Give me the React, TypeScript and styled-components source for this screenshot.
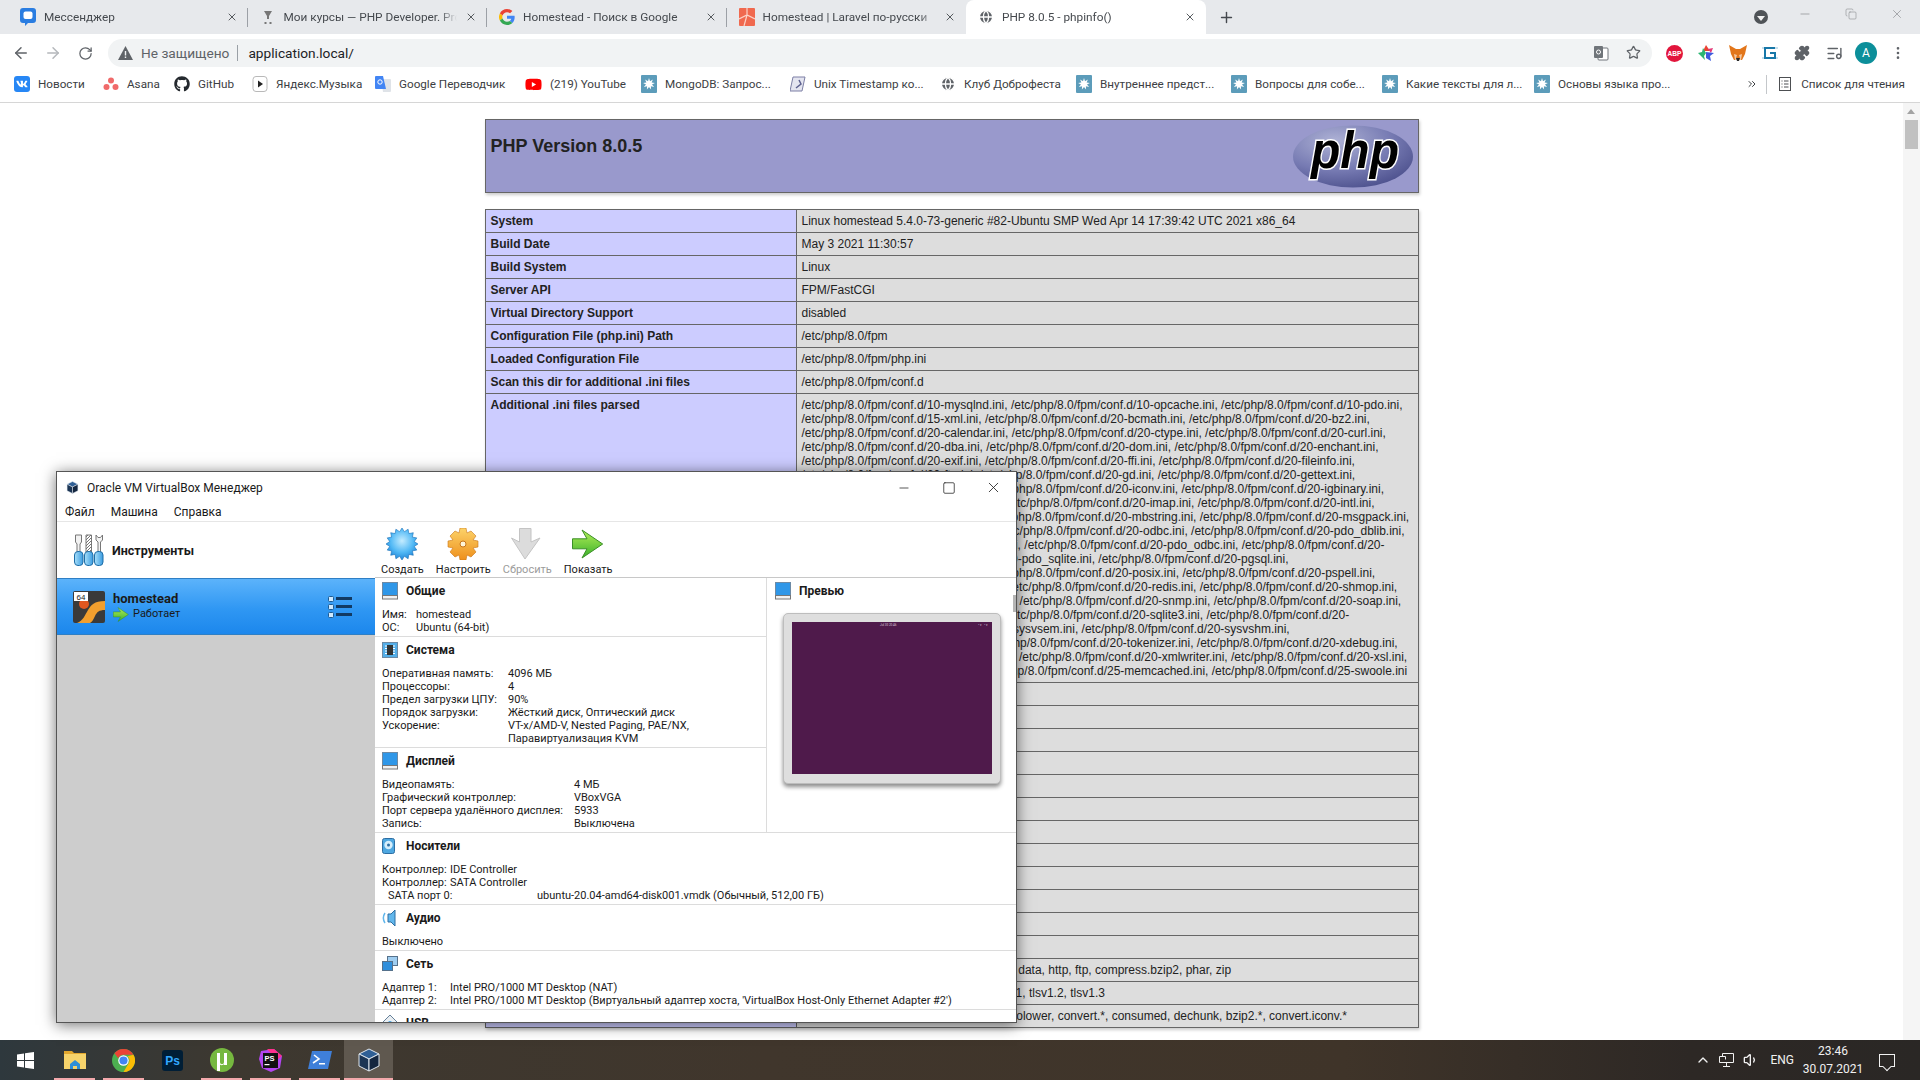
import * as React from "react";
import styled, { createGlobalStyle } from "styled-components";
import { ArrowLeft, ArrowRight, RotateCw, Star, Puzzle, MoreVertical, X, Plus, Minus, Square, ChevronUp, Volume1, ChevronsRight, Copy, Globe, ListMusic } from "lucide-react";
import { FaGithub, FaYoutube, FaVk } from "react-icons/fa";

const UI = `Roboto, "Noto Sans", sans-serif`;

const GlobalStyle = createGlobalStyle`
    html, body {
        margin: 0;
        height: 100%;
        overflow: hidden;
        background: #fff;
    }
    * { box-sizing: border-box; }
`;

const Screen = styled.div`
    position: relative;
    display: flex;
    flex-direction: column;
    width: 1920px;
    height: 1080px;
    overflow: hidden;
    font-family: ${UI};
`;

/* ---------- chrome ---------- */

const TabStrip = styled.div`
    display: flex;
    align-items: flex-end;
    flex: 0 0 34px;
    padding-left: 8px;
    background: #e7e9ec;
    color: #45494e;
    font-size: 11.8px;
`;

const Tab = styled.div<{ $active?: boolean }>`
    position: relative;
    display: flex;
    align-items: center;
    gap: 8px;
    flex: 0 0 239.5px;
    min-width: 0;
    height: 34px;
    padding: 0 10px 0 12px;
    background: ${(p) => (p.$active ? "#fff" : "transparent")};
    border-radius: ${(p) => (p.$active ? "8px 8px 0 0" : "0")};

    &:not(:nth-child(n + 4))::after {
        content: "";
        position: absolute;
        right: 0;
        top: 8px;
        height: 19px;
        width: 1px;
        background: #9ca0a6;
    }

    svg {
        flex-shrink: 0;
    }
`;

const TabTitle = styled.span`
    flex: 1;
    min-width: 0;
    overflow: hidden;
    white-space: nowrap;
    -webkit-mask-image: linear-gradient(90deg, #000 90%, transparent);
`;

const NewTab = styled.div`
    display: flex;
    align-items: center;
    height: 34px;
    margin-left: 12px;
    color: #45494e;
`;

const WindowControls = styled.div`
    display: flex;
    align-items: center;
    height: 34px;
    margin-left: auto;
    color: #8a8d91;
`;

const ProfileDot = styled.div`
    display: flex;
    align-items: center;
    justify-content: center;
    width: 14px;
    height: 14px;
    margin-right: 14px;
    border-radius: 50%;
    background: #4f5357;
`;

const ProfileCaret = styled.div`
    width: 0;
    height: 0;
    margin-top: 2px;
    border-left: 4px solid transparent;
    border-right: 4px solid transparent;
    border-top: 5px solid #f1f1f1;
`;

const CaptionSlot = styled.div`
    display: flex;
    justify-content: center;
    width: 46px;
    margin-bottom: 6px;
`;

const Toolbar = styled.div`
    display: flex;
    align-items: center;
    flex: 0 0 34px;
    padding: 5px 6px 1px 5px;
    background: #fff;
`;

const NavButton = styled.div<{ $off?: boolean }>`
    display: flex;
    align-items: center;
    justify-content: center;
    width: 32px;
    color: ${(p) => (p.$off ? "#b5b8bc" : "#5f6368")};
`;

const Omnibox = styled.div`
    display: flex;
    align-items: center;
    flex: 1;
    height: 28px;
    margin: 0 6px 0 7px;
    padding: 0 10px 1px;
    border-radius: 14px;
    background: #f1f3f4;
    font-size: 14px;
    color: #202124;
`;

const NotSecure = styled.span`
    margin-left: 8px;
    padding-right: 8px;
    border-right: 1px solid #9aa0a6;
    color: #5f6368;
    font-size: 13.7px;
`;

const Url = styled.span`
    margin-left: 10px;
    font-size: 13.7px;
`;

const OmniIcons = styled.div`
    display: flex;
    align-items: center;
    gap: 17px;
    margin-left: auto;
    padding-right: 1px;
    color: #5f6368;
`;

const Extension = styled.div`
    display: flex;
    align-items: center;
    justify-content: center;
    width: 32px;
    color: #5f6368;
`;

const Avatar = styled.div`
    display: flex;
    align-items: center;
    justify-content: center;
    width: 22px;
    height: 22px;
    border-radius: 50%;
    background: #0c8f9a;
    color: #fff;
    font-size: 12px;
`;

const BookmarkBar = styled.div`
    display: flex;
    align-items: center;
    flex: 0 0 35px;
    padding: 0 0 2px 14px;
    background: #fff;
    border-bottom: 1px solid #d6d6d6;
    color: #3c4043;
    font-size: 11.7px;
`;

const Bookmark = styled.div<{ $w: number }>`
    display: flex;
    align-items: center;
    gap: 8px;
    flex: 0 0 ${(p) => p.$w}px;
    white-space: nowrap;
`;

const BookmarkEnd = styled.div`
    display: flex;
    align-items: center;
    margin-left: auto;
    padding-right: 15px;
    gap: 8px;
`;

const EndDivider = styled.div`
    width: 1px;
    height: 19px;
    margin-right: 2px;
    background: #c4c7ca;
`;

const VkTile = styled.div`
    display: flex;
    align-items: center;
    justify-content: center;
    width: 16px;
    height: 16px;
    border-radius: 3px;
    background: #2787f5;
    color: #fff;
`;

/* ---------- phpinfo page ---------- */

const PageArea = styled.div`
    display: flex;
    flex: 1;
    min-height: 0;
`;

const PhpDoc = styled.main`
    flex: 1;
    padding-top: 16px;
    overflow: hidden;
    font-family: "Liberation Sans", Arial, sans-serif;
    font-size: 12px;
    line-height: 14px;
    color: #222;
`;

const PhpTable = styled.table`
    width: 934px;
    margin: 0 auto 16px;
    border-collapse: collapse;
    border: 0;
    box-shadow: 1px 2px 3px #ccc;
`;

const PhpHeadCell = styled.td`
    height: 73px;
    padding: 4px 5px;
    border: 1px solid #666;
    background: #99c;
    vertical-align: top;
`;

const PhpLogoWrap = styled.div`
    float: right;
    margin-top: 1px;

    svg {
        display: block;
    }
`;

const PhpTitle = styled.h1`
    margin: 0;
    padding-top: 12px;
    font-size: 18px;
    line-height: 21px;
    font-weight: bold;
    color: #222;
`;

const PhpKey = styled.td`
    width: 311px;
    padding: 4px 5px;
    border: 1px solid #666;
    background: #ccf;
    font-weight: bold;
    vertical-align: baseline;
    color: #222;
`;

const PhpValue = styled.td`
    padding: 4px 5px;
    border: 1px solid #666;
    background: #ddd;
    vertical-align: baseline;
    word-wrap: break-word;
    color: #222;
`;

const Scrollbar = styled.div`
    position: relative;
    flex: 0 0 17px;
    background: #f5f5f5;
`;

const ScrollArrow = styled.div`
    position: absolute;
    top: 6px;
    left: 4px;
    width: 0;
    height: 0;
    border-left: 4px solid transparent;
    border-right: 4px solid transparent;
    border-bottom: 5px solid #a3a3a3;
`;

const ScrollThumb = styled.div`
    position: absolute;
    top: 17px;
    left: 2px;
    width: 13px;
    height: 29px;
    background: #c1c1c1;
`;

/* ---------- taskbar ---------- */

const Taskbar = styled.footer`
    display: flex;
    align-items: center;
    flex: 0 0 40px;
    background: linear-gradient(90deg, #2e383d 0%, #3d3830 12%, #40362c 40%, #3f3429 70%, #2d2825 88%, #2a2725 100%);
    color: #f1f1f1;
    font-size: 12px;
`;

const StartSlot = styled.div`
    display: flex;
    align-items: center;
    justify-content: center;
    flex: 0 0 50px;
    height: 40px;
`;

const TaskButton = styled.div<{ $running?: boolean; $active?: boolean }>`
    position: relative;
    display: flex;
    align-items: center;
    justify-content: center;
    flex: 0 0 49px;
    height: 40px;
    background: ${(p) => (p.$active ? "#5f584f" : "transparent")};

    &::after {
        content: "";
        display: ${(p) => (p.$running ? "block" : "none")};
        position: absolute;
        left: ${(p) => (p.$active ? "0" : "4px")};
        right: ${(p) => (p.$active ? "0" : "4px")};
        bottom: 0;
        height: 2px;
        background: #f3a9ac;
    }
`;

const Tray = styled.div`
    display: flex;
    align-items: center;
    gap: 8px;
    margin-left: auto;
`;

const TrayLang = styled.span`
    margin: 0 1px 0 3px;
    font-size: 12px;
`;

const Clock = styled.div`
    display: flex;
    flex-direction: column;
    align-items: center;
    gap: 3px;
    width: 60px;
    margin-right: 8px;
    line-height: 15px;
`;

const NotifyBox = styled.div`
    position: relative;
    width: 16px;
    height: 13px;
    margin-right: 25px;
    border: 1px solid #f1f1f1;

    &::after {
        content: "";
        position: absolute;
        left: 4px;
        bottom: -4px;
        width: 5px;
        height: 5px;
        background: #2b2725;
        border-right: 1px solid #f1f1f1;
        border-bottom: 1px solid #f1f1f1;
        transform: rotate(45deg);
    }
`;

/* ---------- virtualbox ---------- */

const VBoxWindow = styled.section`
    position: absolute;
    top: 471px;
    left: 56px;
    display: flex;
    flex-direction: column;
    width: 961px;
    height: 552px;
    background: #fff;
    border: 1px solid #555;
    box-shadow: 0 2px 14px rgba(0, 0, 0, 0.55);
    color: #1a1a1a;
    font-size: 11px;
`;

const TitleBar = styled.div`
    display: flex;
    align-items: center;
    flex: 0 0 31px;
    padding-left: 9px;
    gap: 8px;
    font-size: 12px;
`;

const TitleButtons = styled.div`
    display: flex;
    margin-left: auto;
    color: #222;
`;

const TitleButton = styled.div`
    display: flex;
    align-items: center;
    justify-content: center;
    width: 45px;
    height: 31px;
`;

const MenuBar = styled.div`
    display: flex;
    align-items: center;
    gap: 16px;
    flex: 0 0 19px;
    padding-left: 8px;
    border-bottom: 1px solid #e6e6e6;
    font-size: 12px;
`;

const VBoxBody = styled.div`
    display: flex;
    flex: 1;
    min-height: 0;
`;

const Sidebar = styled.aside`
    display: flex;
    flex-direction: column;
    flex: 0 0 318px;
    background: #cdcdcd;
`;

const ToolsRow = styled.div`
    display: flex;
    align-items: center;
    flex: 0 0 56px;
    gap: 8px;
    padding-left: 17px;
    background: #fff;
    font-size: 12.5px;
    font-weight: bold;
`;

const VmRow = styled.div`
    position: relative;
    display: flex;
    align-items: center;
    flex: 0 0 57px;
    gap: 8px;
    padding-left: 16px;
    background: linear-gradient(180deg, #5cb3fb 0%, #2f97f3 55%, #1c87ec 100%);
    border-top: 1px solid #2f7fc4;
    border-bottom: 1px solid #2f7fc4;
`;

const VmText = styled.div`
    display: flex;
    flex-direction: column;
    gap: 1px;
    line-height: 14px;
`;

const VmName = styled.strong`
    font-size: 13px;
`;

const VmState = styled.span`
    display: flex;
    align-items: center;
    gap: 4px;
`;

const VmMenu = styled.div`
    margin-left: auto;
    margin-right: 23px;
    line-height: 0;
`;

const MainPane = styled.div`
    display: flex;
    flex-direction: column;
    flex: 1;
    min-width: 0;
`;

const ToolStrip = styled.div`
    display: flex;
    flex: 0 0 56px;
    gap: 12px;
    padding: 6px 0 0 6px;
    border-bottom: 1px solid #c8c8c8;
`;

const ToolButton = styled.div<{ $off?: boolean }>`
    display: flex;
    flex-direction: column;
    align-items: center;
    gap: 3px;
    color: ${(p) => (p.$off ? "#9b9b9b" : "#1a1a1a")};

    svg {
        display: block;
        height: 32px;
    }
`;

const Details = styled.div`
    position: relative;
    flex: 1;
    min-height: 0;
    overflow: hidden;
`;

const TopGrid = styled.div`
    display: grid;
    grid-template-columns: 391px 1fr;
    border-bottom: 1px solid #dcdcdc;
`;

const PreviewCol = styled.div`
    padding: 5px 7px 0 8px;
    border-left: 1px solid #dcdcdc;
`;

const Section = styled.div`
    padding: 5px 7px 2px;
    border-bottom: 1px solid #dcdcdc;
`;

const LeftSection = styled(Section)`
    &:last-child {
        border-bottom: 0;
    }
`;

const SectionHead = styled.div`
    display: flex;
    align-items: center;
    gap: 8px;
    height: 16px;
    margin-bottom: 9px;
    font-size: 12px;
    font-weight: bold;
`;

const InfoRow = styled.div<{ $label: number; $indent?: number }>`
    display: grid;
    grid-template-columns: ${(p) => p.$label}px 1fr;
    padding-left: ${(p) => p.$indent || 0}px;
    line-height: 13px;
    white-space: nowrap;
`;

const PlainRow = styled.div`
    line-height: 13px;
`;

const PreviewFrame = styled.div`
    width: 218px;
    height: 171px;
    margin: 14px 0 0 8px;
    padding: 8px;
    border-radius: 5px;
    background: #dedede;
    border: 1px solid #bdbdbd;
    box-shadow: 0 3px 4px rgba(0, 0, 0, 0.45);
`;

const PreviewScreen = styled.div`
    display: flex;
    justify-content: space-between;
    width: 200px;
    height: 152px;
    padding: 1px 4px 0 88px;
    background: #4f1a4b;
    color: #d9c9d8;
    font-size: 3px;
    line-height: 5px;
`;

const DetailsThumb = styled.div`
    position: absolute;
    top: 17px;
    right: 0;
    width: 3px;
    height: 17px;
    background: #b5b5b5;
`;

/* ---------- drawings ---------- */

const starPoints = (cx: number, cy: number, r1: number, r2: number, n: number) => {
    const pts: string[] = [];
    for (let i = 0; i < n * 2; i++) {
        const r = i % 2 ? r2 : r1;
        const a = (Math.PI * i) / n;
        pts.push(`${(cx + r * Math.sin(a)).toFixed(1)},${(cy - r * Math.cos(a)).toFixed(1)}`);
    }
    return pts.join(" ");
};

const PhpLogo = () => (
    <svg width="120" height="63" viewBox="0 0 120 63">
        <defs>
            <radialGradient id="phpG" cx="35%" cy="25%" r="85%">
                <stop offset="0" stopColor="#aeb2d5" />
                <stop offset="0.55" stopColor="#777bb3" />
                <stop offset="1" stopColor="#484c89" />
            </radialGradient>
        </defs>
        <ellipse cx="60" cy="31.500" rx="60" ry="31" fill="url(#phpG)" />
        <text x="62" y="43" textAnchor="middle" textLength="88" lengthAdjust="spacingAndGlyphs"
            fontFamily="Liberation Sans" fontStyle="italic" fontWeight="bold" fontSize="52"
            fill="#000" stroke="#fff" strokeWidth="3" paintOrder="stroke">php</text>
    </svg>
);

const MessengerIcon = () => (
    <svg width="16" height="18" viewBox="0 0 16 18">
        <path d="M3 0h10a3 3 0 0 1 3 3v9a3 3 0 0 1-3 3H8l-3 3v-3H3a3 3 0 0 1-3-3V3a3 3 0 0 1 3-3z" fill="#2a7de1" />
        <rect x="3.500" y="3.500" width="9" height="7.500" rx="2" fill="#fff" />
    </svg>
);

const CourseIcon = () => (
    <svg width="16" height="16" viewBox="0 0 16 16" fill="#777">
        <path d="M4 2h8L9 7v3H7V7z" />
        <rect x="4.500" y="13" width="2" height="2" />
        <rect x="9.500" y="13" width="2" height="2" />
    </svg>
);

const GoogleIcon = () => (
    <svg width="16" height="16" viewBox="0 0 48 48">
        <path fill="#EA4335" d="M24 9.5c3.5 0 6.7 1.2 9.2 3.6l6.9-6.9C35.9 2.4 30.5 0 24 0 14.6 0 6.5 5.4 2.6 13.2l8 6.2C12.5 13.7 17.800 9.500 24 9.500z" />
        <path fill="#4285F4" d="M47 24.500c0-1.600-.1-3.100-.4-4.500H24v9h12.900c-.6 3-2.200 5.500-4.700 7.200l7.700 6C44.400 37.900 47 31.800 47 24.500z" />
        <path fill="#FBBC05" d="M10.600 28.600A14.500 14.500 0 0 1 10.600 19.400l-8-6.200A24 24 0 0 0 2.600 34.800z" />
        <path fill="#34A853" d="M24 48c6.500 0 11.900-2.100 15.900-5.800l-7.700-6c-2.200 1.400-4.900 2.300-8.200 2.300-6.200 0-11.500-4.200-13.400-9.900l-8 6.200C6.500 42.600 14.600 48 24 48z" />
    </svg>
);

const LaravelIcon = () => (
    <svg width="16" height="18" viewBox="0 0 16 18">
        <rect width="16" height="18" rx="1" fill="#f0694f" />
        <path d="M0 11 L8 7 L16 11 M8 0 V7 M5 18 L8 7" stroke="#fbd3c8" strokeWidth="1.200" fill="none" />
    </svg>
);

const AsanaIcon = () => (
    <svg width="16" height="16" viewBox="0 0 16 16" fill="#f06a6a">
        <circle cx="8" cy="4.500" r="3" />
        <circle cx="3.500" cy="11" r="3" />
        <circle cx="12.500" cy="11" r="3" />
    </svg>
);

const YandexIcon = () => (
    <svg width="16" height="16" viewBox="0 0 16 16">
        <rect x="1" y="0.500" width="14" height="15" rx="3" fill="#fff" stroke="#b9b9b9" />
        <path d="M6 4.500 L11 8 L6 11.500z" fill="#222" />
    </svg>
);

const TranslateIcon = () => (
    <svg width="16" height="16" viewBox="0 0 16 16">
        <path d="M6 3h9a1 1 0 0 1 1 1v11a1 1 0 0 1-1 1H8z" fill="#dfe3e8" />
        <path d="M1 0h7l3 13H1a1 1 0 0 1-1-1V1a1 1 0 0 1 1-1z" fill="#4285f4" />
        <circle cx="5" cy="6" r="2.200" fill="none" stroke="#fff" />
    </svg>
);

const SplatIcon = () => (
    <svg width="16" height="18" viewBox="0 0 16 18">
        <rect width="16" height="18" rx="1" fill="#5c9cba" />
        <polygon points={starPoints(8, 9, 6, 3, 9)} fill="#fff" />
    </svg>
);

const UnixIcon = () => (
    <svg width="16" height="16" viewBox="0 0 16 16">
        <path d="M3 1h12l-3 14H0z" fill="#e4e5f0" stroke="#7c7fa5" />
        <path d="M9 4 L11 8 L6 12" stroke="#5d6190" strokeWidth="1.500" fill="none" />
    </svg>
);

const TranslatePageIcon = () => (
    <svg width="16" height="16" viewBox="0 0 16 16">
        <rect x="5" y="3" width="10" height="12" rx="1" fill="#fff" stroke="#70757a" />
        <rect x="1" y="1" width="9" height="12" rx="1" fill="#70757a" />
        <circle cx="5.500" cy="7" r="2" fill="none" stroke="#fff" />
    </svg>
);

const WarnIcon = () => (
    <svg width="15" height="14" viewBox="0 0 15 14">
        <path d="M7.500 0 L15 14 H0z" fill="#5f6368" />
        <rect x="6.800" y="5" width="1.400" height="4.500" fill="#f1f3f4" />
        <rect x="6.800" y="10.500" width="1.400" height="1.500" fill="#f1f3f4" />
    </svg>
);

const AbpIcon = () => (
    <svg width="17" height="17" viewBox="0 0 18 18">
        <circle cx="9" cy="9" r="9" fill="#e2163c" />
        <text x="9" y="12" textAnchor="middle" fontSize="7" fontWeight="bold" fill="#fff" fontFamily="Liberation Sans">ABP</text>
    </svg>
);

const ColorStarIcon = () => (
    <svg width="18" height="18" viewBox="0 0 18 18">
        <path d="M9 1 L13 7 L6 7z" fill="#ea4335" />
        <path d="M11 5 L16 4 L14 9z" fill="#e33b7a" />
        <path d="M9 8 L17 9 L13 12 L14 17 L9 14z" fill="#3d5adf" />
        <path d="M1 9 L5 8 L6 4 L9 9 L7 12 L8 16 L5 13z" fill="#2bb673" />
    </svg>
);

const FoxIcon = () => (
    <svg width="18" height="18" viewBox="0 0 18 18">
        <path d="M0 1 L7 5 H11 L18 1 L16 10 L13 16 H5 L2 10z" fill="#e2761b" />
        <path d="M5 10 L8 11 L7 14 H11 L10 11 L13 10 L12 16 H6z" fill="#f5c8a0" />
        <path d="M7 14 H11 L10 17 H8z" fill="#2b2b2b" />
    </svg>
);

const GridExtIcon = () => (
    <svg width="16" height="16" viewBox="0 0 16 16" fill="none" stroke="#1877a8" strokeWidth="2">
        <path d="M13 3H3v10h10V8H8" />
        <path d="M0 3h16M0 13h16" strokeWidth="0.800" opacity="0.6" />
    </svg>
);

const ListIcon = () => (
    <svg width="16" height="16" viewBox="0 0 16 16" fill="none" stroke="#4d4f52">
        <rect x="2.500" y="1.500" width="11" height="13" />
        <path d="M4.500 5h1 M7 5h4.500 M4.500 8h1 M7 8h4.500 M4.500 11h1 M7 11h4.500" />
    </svg>
);

const WindowsLogo = () => (
    <svg width="17" height="17" viewBox="0 0 17 17" fill="#fff">
        <path d="M0 2.400 7 1.400V8H0z M8 1.300 17 0V8H8z M0 9h7v6.600L0 14.600z M8 9h9v8L8 15.700z" />
    </svg>
);

const ExplorerIcon = () => (
    <svg width="22" height="20" viewBox="0 0 22 20">
        <path d="M0 1h8l2 2h12v3H0z" fill="#e2a72e" />
        <rect y="4" width="22" height="15" fill="#f6d36b" />
        <path d="M6 19v-5l5-4 5 4v5h-3v-3H9v3z" fill="#2f8fd8" />
    </svg>
);

const ChromeIcon = () => (
    <svg width="23" height="23" viewBox="0 0 48 48">
        <circle cx="24" cy="24" r="24" fill="#4caf50" />
        <path d="M24 0a24 24 0 0 1 20.800 12H24a12 12 0 0 0-11.100 7.400L5.200 8.800A24 24 0 0 1 24 0z" fill="#ea4335" />
        <path d="M44.800 12A24 24 0 0 1 24 48l10.400-18A12 12 0 0 0 32.500 15z" fill="#fbbc05" />
        <circle cx="24" cy="24" r="11" fill="#fff" />
        <circle cx="24" cy="24" r="8.500" fill="#4285f4" />
    </svg>
);

const PsIcon = () => (
    <svg width="21" height="21" viewBox="0 0 21 21">
        <rect width="21" height="21" rx="3" fill="#001e36" />
        <text x="10.500" y="15" textAnchor="middle" fontFamily="Liberation Sans" fontWeight="bold" fontSize="12" fill="#31a8ff">Ps</text>
    </svg>
);

const TorrentIcon = () => (
    <svg width="24" height="24" viewBox="0 0 24 24">
        <circle cx="12" cy="12" r="12" fill="#76b83f" />
        <path d="M7 5h3v9c0 3 4 3 4 0V5h3v12h-3v-1c-1 1.500-3 1.500-4 .5V23H7z" fill="#fff" />
    </svg>
);

const StormIcon = () => (
    <svg width="23" height="23" viewBox="0 0 23 23">
        <polygon points="2,2 15,0 23,7 21,19 12,23 3,19 0,10" fill="#b345f1" />
        <polygon points="8,0 15,0 23,7 18,11" fill="#ff318c" />
        <rect x="4" y="4" width="15" height="15" fill="#111" />
        <text x="5.500" y="12" fontFamily="Liberation Sans" fontWeight="bold" fontSize="7.500" fill="#fff">PS</text>
        <rect x="5.500" y="15" width="5" height="1.200" fill="#fff" />
    </svg>
);

const ShellIcon = () => (
    <svg width="24" height="20" viewBox="0 0 24 20">
        <polygon points="4,1 24,1 20,19 0,19" fill="#3f7fd9" />
        <path d="M6 5 L11 9 L5 13" stroke="#fff" strokeWidth="1.600" fill="none" />
        <rect x="11" y="13" width="6" height="1.500" fill="#fff" />
    </svg>
);

const VBoxCube = ({ size }: { size: number }) => (
    <svg width={size} height={size} viewBox="0 0 24 24">
        <polygon points="12,1 22,6 12,11 2,6" fill="#2f5f95" stroke="#dfe7ef" />
        <polygon points="2,6 12,11 12,23 2,18" fill="#1c3554" stroke="#dfe7ef" />
        <polygon points="22,6 12,11 12,23 22,18" fill="#14263f" stroke="#dfe7ef" />
    </svg>
);

const NetworkTray = () => (
    <svg width="16" height="15" viewBox="0 0 16 15" fill="none" stroke="#f1f1f1">
        <path d="M3.500 3.500V.500h11v9h-14v-6h6v3" />
        <path d="M7.500 9.500v4M4 13.500h7" />
    </svg>
);

const ToolsIcon = () => (
    <svg width="30" height="32" viewBox="0 0 30 32">
        <defs>
            <linearGradient id="handle" x1="0" y1="0" x2="1" y2="0">
                <stop offset="0" stopColor="#a9e0fa" />
                <stop offset="1" stopColor="#3a9be0" />
            </linearGradient>
            <pattern id="hatch" width="3" height="3" patternUnits="userSpaceOnUse">
                <path d="M0 3 L3 0" stroke="#777" />
            </pattern>
        </defs>
        <path d="M1.500 1h6v7l-1.500 2v8h-3v-8l-1.500-2z" fill="#f2f2f2" stroke="#777" />
        <path d="M12 1h5.500v17H12z" fill="url(#hatch)" stroke="#777" />
        <path d="M22 1v5l2 2v10h2.500V8l2-2V1l-2 2.500h-2.500z" fill="#f2f2f2" stroke="#777" />
        {[0.5, 10.5, 20.5].map((x) => (
            <rect key={x} x={x} y="17.500" width="8.500" height="14" rx="3.500" fill="url(#handle)" stroke="#1f6ea8" />
        ))}
    </svg>
);

const VmIcon = () => (
    <svg width="32" height="32" viewBox="0 0 32 32">
        <rect width="32" height="32" rx="2" fill="#3a3a3a" />
        <path d="M4 32c6-2 8-8 11-13s6-9 17-9v9c-6 0-8 2-10 6-2 4-3 6-5 7z" fill="#f29f2e" />
        <circle cx="11" cy="13" r="5" fill="#e2571f" />
        <rect x="1" y="1" width="14" height="9" fill="#fff" />
        <text x="8" y="8.500" textAnchor="middle" fontSize="8" fontFamily="Liberation Sans" fill="#222">64</text>
    </svg>
);

const RunArrow = ({ size }: { size: number }) => (
    <svg width={size} height={Math.round(size * 0.92)} viewBox="0 0 32 29">
        <defs>
            <linearGradient id={`go${size}`} x1="0" y1="0" x2="0" y2="1">
                <stop offset="0" stopColor="#b4ee58" />
                <stop offset="1" stopColor="#39b02a" />
            </linearGradient>
        </defs>
        <path d="M0.500 9.300h14.500L10 0.500l20.700 14L10 28.500l5-9.200H0.500z" fill={`url(#go${size})`} stroke="#3b8f27" />
    </svg>
);

const VmMenuIcon = () => (
    <svg width="24" height="22" viewBox="0 0 24 22">
        {[1, 9, 17].map((y) => (
            <React.Fragment key={y}>
                <rect x="0.500" y={y - 0.5} width="5" height="5" rx="1" fill="#cfeaff" stroke="#1c5a94" />
                <rect x="8" y={y} width="16" height="3" fill="#123a63" />
            </React.Fragment>
        ))}
    </svg>
);

const CreateIcon = () => (
    <svg width="32" height="32" viewBox="0 0 32 32">
        <defs>
            <radialGradient id="burst" cx="50%" cy="40%" r="60%">
                <stop offset="0" stopColor="#c4ecff" />
                <stop offset="0.6" stopColor="#52b9f5" />
                <stop offset="1" stopColor="#1f85d8" />
            </radialGradient>
        </defs>
        <polygon points={starPoints(16, 16, 16, 12.5, 16)} fill="url(#burst)" stroke="#1f72b8" strokeWidth="0.600" />
    </svg>
);

const GearIcon = () => (
    <svg width="32" height="32" viewBox="0 0 32 32">
        <defs>
            <linearGradient id="gear" x1="0" y1="0" x2="0" y2="1">
                <stop offset="0" stopColor="#fcd36a" />
                <stop offset="1" stopColor="#ee8f1b" />
            </linearGradient>
        </defs>
        <path d="M13 0h6l1 5 4-2 5 5-3 4 5 1v6l-5 1 3 4-5 5-4-2-1 5h-6l-1-5-4 2-5-5 3-4-5-1v-6l5-1-3-4 5-5 4 2z" fill="url(#gear)" stroke="#c9761a" strokeWidth="0.600" />
        <circle cx="16" cy="16" r="3" fill="#fff5d8" stroke="#c9761a" />
    </svg>
);

const ResetIcon = () => (
    <svg width="32" height="32" viewBox="0 0 32 32">
        <path d="M8.500 0.500H20V14l9-4-15 21L0.500 10l8 4z" fill="#dcdcdc" stroke="#c4c4c4" />
    </svg>
);

const Monitor = ({ color }: { color: string }) => (
    <svg width="16" height="18" viewBox="0 0 16 18">
        <rect x="0.500" y="0.500" width="15" height="13" fill={color} stroke="#6d8aa5" />
        <rect x="0.500" y="13.500" width="15" height="3.500" fill="#f2f2f2" stroke="#777" />
    </svg>
);

const SystemIcon = () => (
    <svg width="16" height="16" viewBox="0 0 16 16">
        <rect x="0.500" y="0.500" width="15" height="15" fill="#54aee8" stroke="#6d8aa5" />
        <rect x="5" y="3" width="6" height="10" fill="#333" />
        <path d="M3 4h2 M3 6.500h2 M3 9h2 M3 11.500h2 M11 4h2 M11 6.500h2 M11 9h2 M11 11.500h2" stroke="#fff" />
    </svg>
);

const DiskIcon = () => (
    <svg width="16" height="16" viewBox="0 0 16 16">
        <rect x="0.500" y="0.500" width="12" height="15" rx="2" fill="#4ea7e0" stroke="#2d6ea3" />
        <circle cx="6.500" cy="7" r="4.200" fill="#d5eefb" />
        <circle cx="6.500" cy="7" r="1.500" fill="#2d6ea3" />
    </svg>
);

const AudioIcon = () => (
    <svg width="16" height="16" viewBox="0 0 16 16" fill="none">
        <path d="M6 4h3l4-4v16l-4-4H6z" fill="#62b7ec" stroke="#2d6ea3" />
        <path d="M3 3c-2 3-2 7 0 10" stroke="#62b7ec" strokeWidth="1.500" />
    </svg>
);

const NetIcon = () => (
    <svg width="16" height="16" viewBox="0 0 16 16">
        <rect x="5.500" y="0.500" width="10" height="9" fill="#9fcdf0" stroke="#55718b" />
        <rect x="0.500" y="5.500" width="10" height="9" fill="#2f8fdc" stroke="#55718b" />
    </svg>
);

const UsbIcon = () => (
    <svg width="16" height="16" viewBox="0 0 16 16">
        <polygon points="8,0 16,8 8,16 0,8" fill="#e9eef2" stroke="#66819a" />
        <circle cx="8" cy="8" r="2" fill="#4ea7e0" />
    </svg>
);

/* ---------- data ---------- */

const confPath = "/etc/php/8.0/fpm/conf.d/";
const iniFiles = [
    "10-mysqlnd", "10-opcache", "10-pdo", "15-xml", "20-bcmath", "20-bz2", "20-calendar", "20-ctype", "20-curl",
    "20-dba", "20-dom", "20-enchant", "20-exif", "20-ffi", "20-fileinfo", "20-ftp", "20-gd", "20-gettext", "20-gmp",
    "20-iconv", "20-igbinary", "20-imagick", "20-imap", "20-intl", "20-ldap", "20-mbstring", "20-msgpack", "20-mysqli",
    "20-odbc", "20-pdo_dblib", "20-pdo_mysql", "20-pdo_odbc", "20-pdo_pgsql", "20-pdo_sqlite", "20-pgsql", "20-phar",
    "20-posix", "20-pspell", "20-readline", "20-redis", "20-shmop", "20-simplexml", "20-snmp", "20-soap", "20-sockets",
    "20-sqlite3", "20-sysvmsg", "20-sysvsem", "20-sysvshm", "20-tidy", "20-tokenizer", "20-xdebug", "20-xmlreader",
    "20-xmlwriter", "20-xsl", "20-zip", "25-memcached", "25-swoole",
].map((f) => `${confPath}${f}.ini`).join(", ");

const phpRows: [string, string][] = [
    ["System", "Linux homestead 5.4.0-73-generic #82-Ubuntu SMP Wed Apr 14 17:39:42 UTC 2021 x86_64"],
    ["Build Date", "May 3 2021 11:30:57"],
    ["Build System", "Linux"],
    ["Server API", "FPM/FastCGI"],
    ["Virtual Directory Support", "disabled"],
    ["Configuration File (php.ini) Path", "/etc/php/8.0/fpm"],
    ["Loaded Configuration File", "/etc/php/8.0/fpm/php.ini"],
    ["Scan this dir for additional .ini files", "/etc/php/8.0/fpm/conf.d"],
    ["Additional .ini files parsed", iniFiles],
    ["PHP API", "20200930"],
    ["PHP Extension", "20200930"],
    ["Zend Extension", "420200930"],
    ["Zend Extension Build", "API420200930,NTS"],
    ["PHP Extension Build", "API20200930,NTS"],
    ["Debug Build", "no"],
    ["Thread Safety", "disabled"],
    ["Zend Signal Handling", "enabled"],
    ["Zend Memory Manager", "enabled"],
    ["Zend Multibyte Support", "provided by mbstring"],
    ["IPv6 Support", "enabled"],
    ["DTrace Support", "available, disabled"],
    ["Registered PHP Streams", "https, ftps, compress.zlib, php, file, glob, data, http, ftp, compress.bzip2, phar, zip"],
    ["Registered Stream Socket Transports", "tcp, udp, unix, udg, ssl, tls, tlsv1.0, tlsv1.1, tlsv1.2, tlsv1.3"],
    ["Registered Stream Filters", "zlib.*, string.rot13, string.toupper, string.tolower, convert.*, consumed, dechunk, bzip2.*, convert.iconv.*"],
];

const tabs = [
    { title: "Мессенджер", icon: <MessengerIcon /> },
    { title: "Мои курсы — PHP Developer. Professional", icon: <CourseIcon /> },
    { title: "Homestead - Поиск в Google", icon: <GoogleIcon /> },
    { title: "Homestead | Laravel по-русски", icon: <LaravelIcon /> },
    { title: "PHP 8.0.5 - phpinfo()", icon: <Globe size={16} color="#fff" fill="#5f6368" />, active: true },
];

const bookmarks = [
    { w: 89, label: "Новости", icon: <VkTile><FaVk size={12} /></VkTile> },
    { w: 71, label: "Asana", icon: <AsanaIcon /> },
    { w: 78, label: "GitHub", icon: <FaGithub size={16} color="#24292e" /> },
    { w: 123, label: "Яндекс.Музыка", icon: <YandexIcon /> },
    { w: 150, label: "Google Переводчик", icon: <TranslateIcon /> },
    { w: 116, label: "(219) YouTube", icon: <FaYoutube size={17} color="#f00" /> },
    { w: 149, label: "MongoDB: Запрос...", icon: <SplatIcon /> },
    { w: 150, label: "Unix Timestamp ко...", icon: <UnixIcon /> },
    { w: 136, label: "Клуб Доброфеста", icon: <Globe size={16} color="#fff" fill="#5f6368" /> },
    { w: 155, label: "Внутреннее предст...", icon: <SplatIcon /> },
    { w: 151, label: "Вопросы для собе...", icon: <SplatIcon /> },
    { w: 152, label: "Какие тексты для л...", icon: <SplatIcon /> },
    { w: 150, label: "Основы языка про...", icon: <SplatIcon /> },
];

const App: React.FC = () => {
    return (
        <Screen>
            <GlobalStyle />
            <TabStrip>
                {tabs.map((t) => (
                    <Tab key={t.title} $active={t.active}>
                        {t.icon}
                        <TabTitle>{t.title}</TabTitle>
                        <X size={12} strokeWidth={1.8} />
                    </Tab>
                ))}
                <NewTab><Plus size={17} /></NewTab>
                <WindowControls>
                    <ProfileDot><ProfileCaret /></ProfileDot>
                    <CaptionSlot><Minus size={14} strokeWidth={1.2} /></CaptionSlot>
                    <CaptionSlot><Copy size={12} strokeWidth={1.2} /></CaptionSlot>
                    <CaptionSlot><X size={14} strokeWidth={1.2} /></CaptionSlot>
                </WindowControls>
            </TabStrip>

            <Toolbar>
                <NavButton><ArrowLeft size={18} /></NavButton>
                <NavButton $off><ArrowRight size={18} /></NavButton>
                <NavButton><RotateCw size={15} /></NavButton>
                <Omnibox>
                    <WarnIcon />
                    <NotSecure>Не защищено</NotSecure>
                    <Url>application.local/</Url>
                    <OmniIcons>
                        <TranslatePageIcon />
                        <Star size={15} />
                    </OmniIcons>
                </Omnibox>
                <Extension><AbpIcon /></Extension>
                <Extension><ColorStarIcon /></Extension>
                <Extension><FoxIcon /></Extension>
                <Extension><GridExtIcon /></Extension>
                <Extension><Puzzle size={16} fill="#5f6368" /></Extension>
                <Extension><ListMusic size={17} /></Extension>
                <Extension><Avatar>A</Avatar></Extension>
                <Extension><MoreVertical size={16} /></Extension>
            </Toolbar>

            <BookmarkBar>
                {bookmarks.map((b) => (
                    <Bookmark key={b.label} $w={b.w}>
                        {b.icon}
                        <span>{b.label}</span>
                    </Bookmark>
                ))}
                <BookmarkEnd>
                    <ChevronsRight size={12} />
                    <EndDivider />
                    <ListIcon />
                    <span>Список для чтения</span>
                </BookmarkEnd>
            </BookmarkBar>

            <PageArea>
                <PhpDoc>
                    <PhpTable>
                        <tbody>
                            <tr>
                                <PhpHeadCell>
                                    <PhpLogoWrap><PhpLogo /></PhpLogoWrap>
                                    <PhpTitle>PHP Version 8.0.5</PhpTitle>
                                </PhpHeadCell>
                            </tr>
                        </tbody>
                    </PhpTable>
                    <PhpTable>
                        <tbody>
                            {phpRows.map(([k, v]) => (
                                <tr key={k}>
                                    <PhpKey>{k}</PhpKey>
                                    <PhpValue>{v}</PhpValue>
                                </tr>
                            ))}
                        </tbody>
                    </PhpTable>
                </PhpDoc>
                <Scrollbar>
                    <ScrollArrow />
                    <ScrollThumb />
                </Scrollbar>
            </PageArea>

            <Taskbar>
                <StartSlot><WindowsLogo /></StartSlot>
                <TaskButton $running><ExplorerIcon /></TaskButton>
                <TaskButton $running><ChromeIcon /></TaskButton>
                <TaskButton><PsIcon /></TaskButton>
                <TaskButton $running><TorrentIcon /></TaskButton>
                <TaskButton $running><StormIcon /></TaskButton>
                <TaskButton $running><ShellIcon /></TaskButton>
                <TaskButton $running $active><VBoxCube size={24} /></TaskButton>
                <Tray>
                    <ChevronUp size={16} />
                    <NetworkTray />
                    <Volume1 size={16} />
                    <TrayLang>ENG</TrayLang>
                    <Clock>
                        <span>23:46</span>
                        <span>30.07.2021</span>
                    </Clock>
                    <NotifyBox />
                </Tray>
            </Taskbar>

            <VBoxWindow>
                <TitleBar>
                    <VBoxCube size={13} />
                    <span>Oracle VM VirtualBox Менеджер</span>
                    <TitleButtons>
                        <TitleButton><Minus size={14} strokeWidth={1.3} /></TitleButton>
                        <TitleButton><Square size={14} strokeWidth={1.3} /></TitleButton>
                        <TitleButton><X size={17} strokeWidth={1.2} /></TitleButton>
                    </TitleButtons>
                </TitleBar>
                <MenuBar>
                    <span>Файл</span>
                    <span>Машина</span>
                    <span>Справка</span>
                </MenuBar>
                <VBoxBody>
                    <Sidebar>
                        <ToolsRow>
                            <ToolsIcon />
                            <span>Инструменты</span>
                        </ToolsRow>
                        <VmRow>
                            <VmIcon />
                            <VmText>
                                <VmName>homestead</VmName>
                                <VmState><RunArrow size={16} />Работает</VmState>
                            </VmText>
                            <VmMenu><VmMenuIcon /></VmMenu>
                        </VmRow>
                    </Sidebar>
                    <MainPane>
                        <ToolStrip>
                            <ToolButton><CreateIcon /><span>Создать</span></ToolButton>
                            <ToolButton><GearIcon /><span>Настроить</span></ToolButton>
                            <ToolButton $off><ResetIcon /><span>Сбросить</span></ToolButton>
                            <ToolButton><RunArrow size={32} /><span>Показать</span></ToolButton>
                        </ToolStrip>
                        <Details>
                            <TopGrid>
                                <div>
                                    <LeftSection>
                                        <SectionHead><Monitor color="#2f97e8" />Общие</SectionHead>
                                        <InfoRow $label={34}><span>Имя:</span><span>homestead</span></InfoRow>
                                        <InfoRow $label={34}><span>ОС:</span><span>Ubuntu (64-bit)</span></InfoRow>
                                    </LeftSection>
                                    <LeftSection>
                                        <SectionHead><SystemIcon />Система</SectionHead>
                                        <InfoRow $label={126}><span>Оперативная память:</span><span>4096 МБ</span></InfoRow>
                                        <InfoRow $label={126}><span>Процессоры:</span><span>4</span></InfoRow>
                                        <InfoRow $label={126}><span>Предел загрузки ЦПУ:</span><span>90%</span></InfoRow>
                                        <InfoRow $label={126}><span>Порядок загрузки:</span><span>Жёсткий диск, Оптический диск</span></InfoRow>
                                        <InfoRow $label={126}><span>Ускорение:</span><span>VT-x/AMD-V, Nested Paging, PAE/NX,<br />Паравиртуализация KVM</span></InfoRow>
                                    </LeftSection>
                                    <LeftSection>
                                        <SectionHead><Monitor color="#2f97e8" />Дисплей</SectionHead>
                                        <InfoRow $label={192}><span>Видеопамять:</span><span>4 МБ</span></InfoRow>
                                        <InfoRow $label={192}><span>Графический контроллер:</span><span>VBoxVGA</span></InfoRow>
                                        <InfoRow $label={192}><span>Порт сервера удалённого дисплея:</span><span>5933</span></InfoRow>
                                        <InfoRow $label={192}><span>Запись:</span><span>Выключена</span></InfoRow>
                                    </LeftSection>
                                </div>
                                <PreviewCol>
                                    <SectionHead><Monitor color="#2f97e8" />Превью</SectionHead>
                                    <PreviewFrame>
                                        <PreviewScreen>
                                            <span>Jul 30 20:46</span>
                                            <span>• ▾ &nbsp; • ▾</span>
                                        </PreviewScreen>
                                    </PreviewFrame>
                                </PreviewCol>
                            </TopGrid>
                            <Section>
                                <SectionHead><DiskIcon />Носители</SectionHead>
                                <InfoRow $label={68}><span>Контроллер:</span><span>IDE Controller</span></InfoRow>
                                <InfoRow $label={68}><span>Контроллер:</span><span>SATA Controller</span></InfoRow>
                                <InfoRow $label={149} $indent={6}><span>SATA порт 0:</span><span>ubuntu-20.04-amd64-disk001.vmdk (Обычный, 512,00 ГБ)</span></InfoRow>
                            </Section>
                            <Section>
                                <SectionHead><AudioIcon />Аудио</SectionHead>
                                <PlainRow>Выключено</PlainRow>
                            </Section>
                            <Section>
                                <SectionHead><NetIcon />Сеть</SectionHead>
                                <InfoRow $label={68}><span>Адаптер 1:</span><span>Intel PRO/1000 MT Desktop (NAT)</span></InfoRow>
                                <InfoRow $label={68}><span>Адаптер 2:</span><span>Intel PRO/1000 MT Desktop (Виртуальный адаптер хоста, 'VirtualBox Host-Only Ethernet Adapter #2')</span></InfoRow>
                            </Section>
                            <Section>
                                <SectionHead><UsbIcon />USB</SectionHead>
                            </Section>
                            <DetailsThumb />
                        </Details>
                    </MainPane>
                </VBoxBody>
            </VBoxWindow>
        </Screen>
    );
};

export default App;
